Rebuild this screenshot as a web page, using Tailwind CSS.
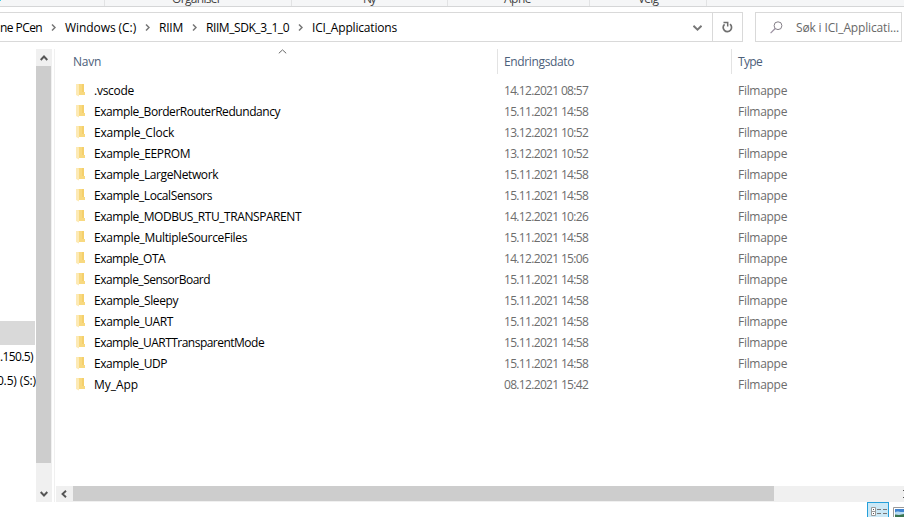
<!DOCTYPE html>
<html lang="nb">
<head>
<meta charset="utf-8">
<title>ICI_Applications</title>
<script src="https://cdn.jsdelivr.net/npm/@tailwindcss/browser@4"></script>
</head>
<body class="w-[904px] h-[517px] overflow-hidden bg-white text-black text-[12px] leading-[21px] font-['Open_Sans','Noto_Sans',sans-serif] whitespace-nowrap">
<div class="w-[904px] h-[517px] flex flex-col overflow-hidden">
  <!-- ribbon group captions -->
  <header class="h-[7px] shrink-0 bg-[#f5f6f7] border-b border-[#d5d6d7] flex items-end overflow-hidden text-[#444]">
    <div class="w-[105px] h-[6px] shrink-0 border-r border-[#e2e3e4]"><div class="w-px h-px bg-[#3fd0e8]"></div></div>
    <div class="w-[187px] h-[6px] shrink-0 border-r border-[#e2e3e4] flex items-end pl-[67px]"><span data-w="49" class="-mb-[3px]">Organiser</span></div>
    <div class="w-[156px] h-[6px] shrink-0 border-r border-[#e2e3e4] flex items-end pl-[71px]"><span data-w="12" class="-mb-[3px]">Ny</span></div>
    <div class="w-[142px] h-[6px] shrink-0 border-r border-[#e2e3e4] flex items-end pl-[56px]"><span data-w="27" class="-mb-[3px]">Åpne</span></div>
    <div class="w-[117px] h-[6px] shrink-0 border-r border-[#e2e3e4] flex items-end pl-[48px]"><span data-w="20" class="-mb-[3px]">Velg</span></div>
  </header>

  <!-- address bar and search -->
  <div class="h-[42px] shrink-0 flex pt-[5px]">
    <nav class="w-[743px] h-[30px] border border-l-0 border-[#d9d9d9] flex items-center">
      <div class="w-[65px] flex justify-between items-center pr-[9px]"><span data-w="42">ne PCen</span><svg class="w-[5px] h-[7px]" viewBox="0 0 5 7"><path d="M1 .5 4 3.500 1 6.500" fill="none" stroke="#777" stroke-width="1.500"/></svg></div>
      <div class="w-[94px] flex justify-between items-center pr-[9px]"><span data-w="71">Windows (C:)</span><svg class="w-[5px] h-[7px]" viewBox="0 0 5 7"><path d="M1 .5 4 3.500 1 6.500" fill="none" stroke="#777" stroke-width="1.500"/></svg></div>
      <div class="w-[47px] flex justify-between items-center pr-[9px]"><span data-w="24">RIIM</span><svg class="w-[5px] h-[7px]" viewBox="0 0 5 7"><path d="M1 .5 4 3.500 1 6.500" fill="none" stroke="#777" stroke-width="1.500"/></svg></div>
      <div class="w-[106px] flex justify-between items-center pr-[9px]"><span data-w="83">RIIM_SDK_3_1_0</span><svg class="w-[5px] h-[7px]" viewBox="0 0 5 7"><path d="M1 .5 4 3.500 1 6.500" fill="none" stroke="#777" stroke-width="1.500"/></svg></div>
      <span data-w="85">ICI_Applications</span>
      <div class="ml-auto flex h-full">
        <div class="w-[19px] flex items-center"><svg class="w-[9px] h-[6px] mt-px" viewBox="0 0 9 6"><path d="M.5.8 4.500 4.600 8.500.8" fill="none" stroke="#777" stroke-width="1.900"/></svg></div>
        <div class="w-[30px] border-l border-[#d9d9d9] flex items-center justify-center"><svg class="w-[11px] h-[12px]" viewBox="0 0 11 12"><path d="M8 3.200A4.200 4.200 0 1 1 2.600 3.300" fill="none" stroke="#707070" stroke-width="1.700"/><path d="M1.500 1.500H5.700V5.500" fill="none" stroke="#707070" stroke-width="1.500"/></svg></div>
      </div>
    </nav>
    <div class="ml-[12px] w-[147px] h-[30px] border border-[#d9d9d9] flex items-center pl-[14px] text-[#686868]">
      <svg class="w-[13px] h-[13px] mr-[13px]" viewBox="0 0 13 13"><circle cx="8" cy="4.700" r="3.900" fill="none" stroke="#858088" stroke-width="1"/><path d="M5.200 7.500.6 12.100" stroke="#9a8fa0" stroke-width="1.200"/></svg>
      <span data-w="103">Søk i ICI_Applicati...</span>
    </div>
  </div>

  <div class="h-[453px] shrink-0 flex">
    <!-- navigation pane -->
    <aside class="w-[36px] shrink-0 overflow-hidden pt-[272px]">
      <div class="w-[35px] h-[24px] bg-[#d9d9d9]"></div>
      <div class="h-[24px] flex justify-end items-center pr-[3px] pb-px"><span data-w="33">.150.5)</span></div>
      <div class="h-[24px] flex justify-end items-center pb-px"><span data-w="39">0.5) (S:)</span></div>
    </aside>
    <div class="w-[16px] shrink-0 bg-[#f0f0f0] flex flex-col">
      <div class="h-[17px] flex items-center justify-center pr-px"><svg class="w-[8px] h-[6px]" viewBox="0 0 8 6"><path d="M.7 5 4 1.500 7.300 5" fill="none" stroke="#555" stroke-width="1.900"/></svg></div>
      <div class="w-[15px] h-[397px] bg-[#cdcdcd]"></div>
      <div class="flex-1"></div>
      <div class="h-[17px] flex items-center justify-center pr-px"><svg class="w-[8px] h-[6px]" viewBox="0 0 8 6"><path d="M.7 1 4 4.500 7.300 1" fill="none" stroke="#555" stroke-width="1.900"/></svg></div>
    </div>

    <!-- file list -->
    <main class="ml-[2px] flex-1 border-l border-[#f0f0f0] flex flex-col">
      <div class="h-[25px] flex text-[#4c607a]">
        <div class="w-[443px] pl-[18px] pt-[2px] border-r border-[#e3e3e3] relative"><span data-w="28">Navn</span>
          <svg class="absolute left-[223px] top-0 w-[9px] h-[5px]" viewBox="0 0 9 5"><path d="M.8 4.300 4.500.9 8.200 4.300" fill="none" stroke="#666" stroke-width="1"/></svg>
        </div>
        <div class="w-[234px] pl-[6px] pt-[2px] border-r border-[#e3e3e3]"><span data-w="70">Endringsdato</span></div>
        <div class="pl-[6px] pt-[2px]"><span data-w="24">Type</span></div>
      </div>
      <div id="rows" class="pt-[6px] flex-1"></div>
      <div class="h-[16px] ml-px bg-[#f0f0f0] flex">
        <div class="w-[17px] flex items-center pl-[5px]"><svg class="w-[6px] h-[8px]" viewBox="0 0 6 8"><path d="M5 .7 1.500 4 5 7.300" fill="none" stroke="#555" stroke-width="1.900"/></svg></div>
        <div class="w-[701px] h-[15px] bg-[#cdcdcd]"></div>
        <div class="ml-auto w-px flex flex-col justify-between py-1"><i class="h-px bg-[#555]"></i><i class="h-px bg-[#555]"></i></div>
      </div>
    </main>
  </div>

  <!-- view switcher -->
  <footer class="h-[15px] flex justify-end">
    <svg class="w-[37px] h-[15px]" viewBox="0 0 37 15">
      <rect x=".5" y=".5" width="21" height="22" fill="#cbe8f6" stroke="#26a0da"/>
      <path d="M4.500 5.500h4v4h-4zM4.500 9.500h4v4h-4z" fill="#fff" stroke="#999"/>
      <path d="M6 7h1v1H6zM6 11h1v1H6z" fill="#555"/>
      <path d="M10 7.500h4M16 7.500h4M10 11.500h4M16 11.500h4" stroke="#777"/>
      <path d="M26.500 16V5.500H38" fill="#fff" stroke="#999"/>
      <path d="M28 7h9v8h-9z" fill="#3f83d0"/><path d="M28 10.500c2-2 4 0 9-.5v3h-9z" fill="#b8dcf3"/><path d="M28 12.500l4 .5 5-1v3h-9z" fill="#3a7550"/>
    </svg>
  </footer>
</div>

<template id="row">
  <div class="h-[21px] flex items-center">
    <div class="w-[449px] pl-[21px] flex items-center">
      <svg class="w-[10px] h-[14px] mr-[8px] -mt-[2px]" viewBox="0 0 10 14"><path d="M2 1h6v8h1v3H2z" fill="#f8d980"/><path d="M6 1h2v8H6z" fill="#f5d06c"/><path d="M0 1h2.500l.5 1v11.500L0 12z" fill="#fdeab5"/></svg>
      <span class="name"></span>
    </div>
    <div class="w-[234px] text-[#6d6d6d]"><span class="date" data-w="84"></span></div>
    <div class="text-[#6d6d6d]"><span data-w="49">Filmappe</span></div>
  </div>
</template>
<script>
const files = [
  ['.vscode', 40, '14.12.2021 08:57'],
  ['Example_BorderRouterRedundancy', 186, '15.11.2021 14:58'],
  ['Example_Clock', 80, '13.12.2021 10:52'],
  ['Example_EEPROM', 96, '13.12.2021 10:52'],
  ['Example_LargeNetwork', 124, '15.11.2021 14:58'],
  ['Example_LocalSensors', 118, '15.11.2021 14:58'],
  ['Example_MODBUS_RTU_TRANSPARENT', 207, '14.12.2021 10:26'],
  ['Example_MultipleSourceFiles', 153, '15.11.2021 14:58'],
  ['Example_OTA', 71, '14.12.2021 15:06'],
  ['Example_SensorBoard', 116, '15.11.2021 14:58'],
  ['Example_Sleepy', 84, '15.11.2021 14:58'],
  ['Example_UART', 79, '15.11.2021 14:58'],
  ['Example_UARTTransparentMode', 170, '15.11.2021 14:58'],
  ['Example_UDP', 73, '15.11.2021 14:58'],
  ['My_App', 44, '08.12.2021 15:42'],
];
const list = document.getElementById('rows');
for (const [name, width, date] of files) {
  const row = document.getElementById('row').content.cloneNode(true);
  const label = row.querySelector('.name');
  label.textContent = name;
  label.dataset.w = width;
  row.querySelector('.date').textContent = date;
  list.append(row);
}
const ctx = document.createElement('canvas').getContext('2d');
ctx.font = '120px "Open Sans", "Noto Sans", sans-serif';
for (const el of document.querySelectorAll('[data-w]')) {
  const natural = ctx.measureText(el.textContent).width / 10;
  el.style.letterSpacing = ((Number(el.dataset.w) + 0.1 - natural) / el.textContent.length).toFixed(3) + 'px';
}
</script>
</body>
</html>
